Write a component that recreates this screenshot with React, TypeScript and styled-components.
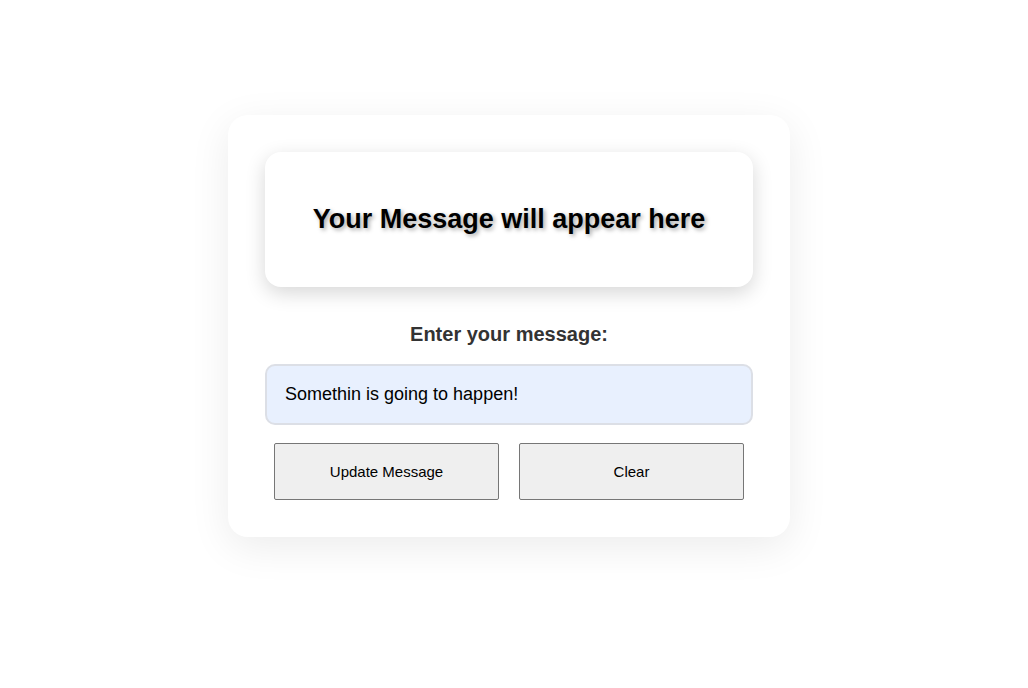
import React, { useState } from "react";
import styled, { createGlobalStyle } from "styled-components";

const Global = createGlobalStyle`
  html, body { margin: 0; padding: 0; background: #ffffff; }
  body { font-family: "Liberation Sans", Arial, sans-serif; }
`;

const Page = styled.div`
  min-height: 100vh;
  box-sizing: border-box;
  display: flex;
  justify-content: center;
  align-items: flex-start;
  padding: 115px 10px 0 0;
`;

const Card = styled.div`
  width: 562px;
  box-sizing: border-box;
  padding: 37px;
  background: #ffffff;
  border-radius: 20px;
  box-shadow: 0 10px 40px rgba(0, 0, 0, 0.08);
  display: flex;
  flex-direction: column;
`;

const Display = styled.div`
  height: 135px;
  border-radius: 16px;
  background: #ffffff;
  box-shadow: 0 6px 20px rgba(0, 0, 0, 0.16);
  display: flex;
  align-items: center;
  justify-content: center;
`;

const Heading = styled.h1`
  margin: 0;
  font-size: 27px;
  font-weight: bold;
  color: #000;
  text-shadow: 2px 2px 4px rgba(0, 0, 0, 0.35);
`;

const Label = styled.label`
  margin-top: 36px;
  text-align: center;
  font-size: 20px;
  font-weight: bold;
  color: #333;
  line-height: 23px;
`;

const Input = styled.input`
  margin-top: 18px;
  height: 61px;
  box-sizing: border-box;
  padding: 0 18px;
  border: 2px solid #dcdfe6;
  border-radius: 10px;
  background: #e8f0fe;
  font-family: "Liberation Sans", Arial, sans-serif;
  font-size: 18px;
  color: #000;
  outline: none;
`;

const Buttons = styled.div`
  margin-top: 18px;
  padding: 0 9px;
  display: flex;
  justify-content: space-between;
`;

const Button = styled.button`
  width: 225px;
  height: 57px;
  background: #efefef;
  border: 1px solid #767676;
  border-radius: 2px;
  font-family: "Liberation Sans", Arial, sans-serif;
  font-size: 15px;
  color: #000;
`;

export default function App() {
  const [value, setValue] = useState("Somethin is going to happen!");
  return (
    <>
      <Global />
      <Page>
        <Card>
          <Display>
            <Heading>Your Message will appear here</Heading>
          </Display>
          <Label htmlFor="msg">Enter your message:</Label>
          <Input id="msg" value={value} onChange={(e) => setValue(e.target.value)} />
          <Buttons>
            <Button>Update Message</Button>
            <Button onClick={() => setValue("")}>Clear</Button>
          </Buttons>
        </Card>
      </Page>
    </>
  );
}
